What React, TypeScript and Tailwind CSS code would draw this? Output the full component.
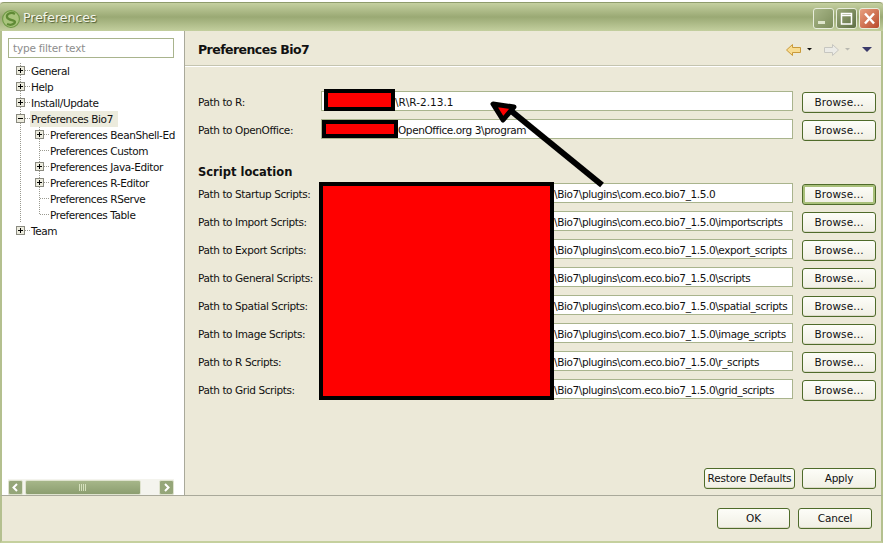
import React from "react";

const font = { fontFamily: '"DejaVu Sans", sans-serif' };

function Btn({ children, w = "w-[74px]", focus = false, wide = false }: { children: React.ReactNode; w?: string; focus?: boolean; wide?: boolean }) {
  return (
    <button
      className={`${w} ${wide ? "tracking-[0.1px]" : "tracking-[-0.2px]"} h-[21px] shrink-0 rounded-[3px] border border-[#4f6b2a] bg-gradient-to-b from-[#fdfdf8] to-[#f0efe4] text-[10.5px] text-[#111] ${focus ? "shadow-[inset_0_0_0_2px_#a9c07a]" : "shadow-[inset_0_-1px_0_#dddbc9]"}`}
    >
      {children}
    </button>
  );
}

function Row({ label, value, focus, valuePad = "pl-[232px]", track = "tracking-[-0.4px]" }: { label: string; value: string; focus?: boolean; valuePad?: string; track?: string }) {
  return (
    <div className="flex h-[28px] items-center pl-[13px]">
      <div className="w-[123px] shrink-0 pt-[4px] text-[10.5px] tracking-[-0.4px] text-[#111]">{label}</div>
      <div className={`h-[20px] w-[472px] shrink-0 overflow-hidden whitespace-nowrap border border-[#a9b48d] bg-white pt-[1px] ${valuePad} text-[10.5px] leading-[18px] ${track} text-[#111]`}>
        {value}
      </div>
      <div className="ml-[9px]">
        <Btn focus={focus} wide>Browse...</Btn>
      </div>
    </div>
  );
}

function Box({ x, minus }: { x: number; minus?: boolean }) {
  return (
    <g>
      <rect x={x + 0.5} y={3.5} width={8} height={8} fill="#ecebdd" stroke="#8a8a80" />
      <path d={`M${x + 2} 7.5h5`} stroke="#000" />
      {!minus && <path d={`M${x + 4.5} 5v5`} stroke="#000" />}
    </g>
  );
}

function TreeRow({ label, level = 0, kind = "plus", vert, last, selected }: { label: string; level?: number; kind?: "plus" | "minus" | "leaf"; vert?: boolean; last?: boolean; selected?: boolean }) {
  const dot = "#9a9a90";
  const w = level ? 49 : 30;
  const bx = level ? 35 : 16;
  return (
    <div className="flex h-[16px] items-center">
      <svg width={w} height={16} className="shrink-0">
        {(level > 0 || vert) && <path d="M20.5 0v16" stroke={dot} strokeDasharray="1 1" />}
        {level > 0 && <path d={last ? "M39.5 0v8" : "M39.5 0v16"} stroke={dot} strokeDasharray="1 1" />}
        <path d={`M${bx + 9} 7.5H${w}`} stroke={dot} strokeDasharray="1 1" />
        {kind === "leaf" ? <path d={`M40 7.5H${w}`} stroke={dot} strokeDasharray="1 1" /> : <Box x={bx} minus={kind === "minus"} />}
      </svg>
      <span className={`whitespace-nowrap pl-[1px] pr-[5px] text-[10.5px] leading-[16px] tracking-[-0.4px] text-[#111] ${selected ? "bg-[#ecebdd]" : ""}`}>{label}</span>
    </div>
  );
}

function Arrow({ dir, color, stroke }: { dir: "l" | "r"; color: string; stroke: string }) {
  return (
    <svg width={15} height={12} viewBox="0 0 15 12">
      <path
        d={dir === "l" ? "M0.5 6L6.5 0.5V3.5H14.5V8.5H6.5V11.5Z" : "M14.5 6L8.5 0.5V3.5H0.5V8.5H8.5V11.5Z"}
        fill={color}
        stroke={stroke}
      />
    </svg>
  );
}

function Tri({ c, w = 5 }: { c: string; w?: number }) {
  return (
    <svg width={w * 2} height={w} viewBox={`0 0 ${w * 2} ${w}`}>
      <path d={`M0 0H${w * 2}L${w} ${w}Z`} fill={c} />
    </svg>
  );
}

function WinBtn({ kind }: { kind: "min" | "max" | "close" }) {
  const bg =
    kind === "close"
      ? "bg-gradient-to-br from-[#e8a080] to-[#b8482a]"
      : kind === "max"
        ? "bg-gradient-to-br from-[#9aa878] to-[#5f6f45]"
        : "bg-gradient-to-br from-[#a8b688] to-[#7e8e5c]";
  return (
    <div className={`flex h-[21px] w-[21px] items-center justify-center rounded-[3px] border border-[#e8eddc] ${bg}`}>
      <svg width={15} height={15} viewBox="0 0 15 15">
        {kind === "min" && <rect x={2} y={10} width={7} height={3} fill="#dfe6cc" />}
        {kind === "max" && <path d="M2.5 4.5V13h10V2.5h-10V4.5h10" fill="none" stroke="#fff" strokeWidth={1.5} />}
        {kind === "close" && <path d="M3 2.5l9 10M12 2.5l-9 10" stroke="#fff" strokeWidth={2.4} />}
      </svg>
    </div>
  );
}

export default function App() {
  const rows = [
    ["Path to Startup Scripts:", "\\Bio7\\plugins\\com.eco.bio7_1.5.0"],
    ["Path to Import Scripts:", "\\Bio7\\plugins\\com.eco.bio7_1.5.0\\importscripts"],
    ["Path to Export Scripts:", "\\Bio7\\plugins\\com.eco.bio7_1.5.0\\export_scripts"],
    ["Path to General Scripts:", "\\Bio7\\plugins\\com.eco.bio7_1.5.0\\scripts"],
    ["Path to Spatial Scripts:", "\\Bio7\\plugins\\com.eco.bio7_1.5.0\\spatial_scripts"],
    ["Path to Image Scripts:", "\\Bio7\\plugins\\com.eco.bio7_1.5.0\\image_scripts"],
    ["Path to R Scripts:", "\\Bio7\\plugins\\com.eco.bio7_1.5.0\\r_scripts"],
    ["Path to Grid Scripts:", "\\Bio7\\plugins\\com.eco.bio7_1.5.0\\grid_scripts"],
  ];
  return (
    <div className="relative flex h-[543px] w-[883px] flex-col overflow-hidden bg-[#ece9d8]" style={font}>
      <div className="h-[2px] bg-white" />
      <div className="flex h-[29px] shrink-0 items-center rounded-t-[4px] border-t border-[#8f9c6c] bg-gradient-to-b from-[#c5d0a0] via-[#9aa974] to-[#c3cf9e] pl-[2px] pr-[3px] pt-[3px]">
        <svg width={18} height={18} viewBox="0 0 16 16" className="shrink-0">
          <circle cx={8} cy={8} r={7.5} fill="#a9c47c" stroke="#6f9a45" />
          <path d="M11.500 3.500C8 1.500 3.500 3.500 4.500 6.500S11.500 8.500 11.500 10.500 8 14 4.500 12.500" fill="none" stroke="#5f8a35" strokeWidth={2} />
        </svg>
        <span className="ml-[3px] text-[12.5px] text-[#f4f6ea] [text-shadow:1px_1px_1px_#4d5a33]">Preferences</span>
        <div className="ml-auto flex gap-[2px]">
          <WinBtn kind="min" />
          <WinBtn kind="max" />
          <WinBtn kind="close" />
        </div>
      </div>

      <div className="flex min-h-0 flex-1 border-l-2 border-r-2 border-[#b4c08f]">
        <aside className="flex w-[183px] shrink-0 flex-col border-r border-[#a9a99a] bg-white pl-[6px] pr-[10px] pt-[7px]">
          <div className="h-[20px] border border-[#a9b48d] pl-[4px] text-[10.5px] leading-[18px] tracking-[-0.2px] text-[#8d8d8d]">type filter text</div>
          <div className="-ml-[8px] -mr-[10px] mt-[5px] flex-1">
            <TreeRow label="General" vert />
            <TreeRow label="Help" vert />
            <TreeRow label="Install/Update" vert />
            <TreeRow label="Preferences Bio7" kind="minus" vert selected />
            <TreeRow label="Preferences BeanShell-Ed" level={1} />
            <TreeRow label="Preferences Custom" level={1} kind="leaf" />
            <TreeRow label="Preferences Java-Editor" level={1} />
            <TreeRow label="Preferences R-Editor" level={1} />
            <TreeRow label="Preferences RServe" level={1} kind="leaf" />
            <TreeRow label="Preferences Table" level={1} kind="leaf" last />
            <TreeRow label="Team" />
          </div>
          <div className="flex h-[16px] items-center bg-[#f4f4ee]">
            <div className="flex h-[15px] w-[15px] items-center justify-center rounded-[2px] border border-[#dfe3cf] bg-[#95a679]">
              <svg width={9} height={9} viewBox="0 0 9 9"><path d="M6 1L2.500 4.500L6 8" fill="none" stroke="#fff" strokeWidth={2} /></svg>
            </div>
            <div className="ml-[2px] flex h-[15px] w-[116px] items-center justify-center rounded-[2px] border border-[#dfe3cf] bg-gradient-to-b from-[#a6b689] to-[#8c9e70]">
              <svg width={8} height={7} viewBox="0 0 8 7"><path d="M0.500 0v7M2.500 0v7M4.500 0v7M6.500 0v7" stroke="#d5e0bd" /></svg>
            </div>
            <div className="ml-auto flex h-[15px] w-[15px] items-center justify-center rounded-[2px] border border-[#dfe3cf] bg-[#95a679]">
              <svg width={9} height={9} viewBox="0 0 9 9"><path d="M3 1L6.500 4.500L3 8" fill="none" stroke="#fff" strokeWidth={2} /></svg>
            </div>
          </div>
        </aside>

        <main className="flex min-w-0 flex-1 flex-col">
          <div className="flex h-[35px] shrink-0 items-center border-b border-[#c4c4b0] pl-[13px] pr-[9px] pt-[3px] shadow-[0_1px_0_#fff]">
            <h1 className="mt-[2px] text-[12.5px] font-bold tracking-[-0.55px] text-[#111]">Preferences Bio7</h1>
            <div className="ml-auto flex items-center gap-[3px]">
              <Arrow dir="l" color="#f8dc90" stroke="#c99a3a" />
              <span className="ml-[3px]"><Tri c="#111" w={2.500} /></span>
              <span className="ml-[9px]"><Arrow dir="r" color="#ebebe6" stroke="#c6c6c0" /></span>
              <span className="ml-[3px]"><Tri c="#b8b8b0" w={2.500} /></span>
              <span className="ml-[9px]"><Tri c="#3a3a6a" w={5} /></span>
            </div>
          </div>
          <div className="pt-[21px]">
            <Row label="Path to R:" value="\R\R-2.13.1" valuePad="pl-[73px]" track="tracking-[0px]" />
            <Row label="Path to OpenOffice:" value="OpenOffice.org 3\program" valuePad="pl-[76px]" />
            <div className="flex h-[36px] items-end pl-[13px] text-[11.5px] font-bold leading-[13px] text-[#111]">Script location</div>
            <div>
              {rows.map(([l, v], i) => (
                <Row key={l} label={l} value={v} focus={i === 0} />
              ))}
            </div>
          </div>
          <div className="mt-auto flex justify-end gap-[7px] pb-[6px] pr-[5px]">
            <Btn w="w-[91px]">Restore Defaults</Btn>
            <Btn>Apply</Btn>
          </div>
        </main>
      </div>

      <div className="flex h-[48px] shrink-0 items-center justify-end gap-[8px] border-x-2 border-b-2 border-t border-b-[#c5d09e] border-x-[#b4c08f] border-t-[#a9a99a] pr-[9px]">
        <Btn w="w-[73px]">OK</Btn>
        <Btn>Cancel</Btn>
      </div>

      {/* redaction marks painted over the screenshot */}
      <div className="absolute left-[324px] top-[89px] h-[22px] w-[71px] border-[4px] border-black bg-[#ff0000]" />
      <div className="absolute left-[322px] top-[120px] h-[18px] w-[76px] border-[4px] border-black bg-[#ff0000]" />
      <div className="absolute left-[319px] top-[182px] h-[218px] w-[235px] border-[4px] border-black bg-[#ff0000]" />
      <svg className="absolute left-[480px] top-[90px]" width={130} height={110} viewBox="0 0 130 110">
        <path d="M122 95L30 20" stroke="#000" strokeWidth={6} />
        <path d="M13 14L34 17L23 30Z" fill="#f00" stroke="#000" strokeWidth={5} strokeLinejoin="round" />
      </svg>
    </div>
  );
}
